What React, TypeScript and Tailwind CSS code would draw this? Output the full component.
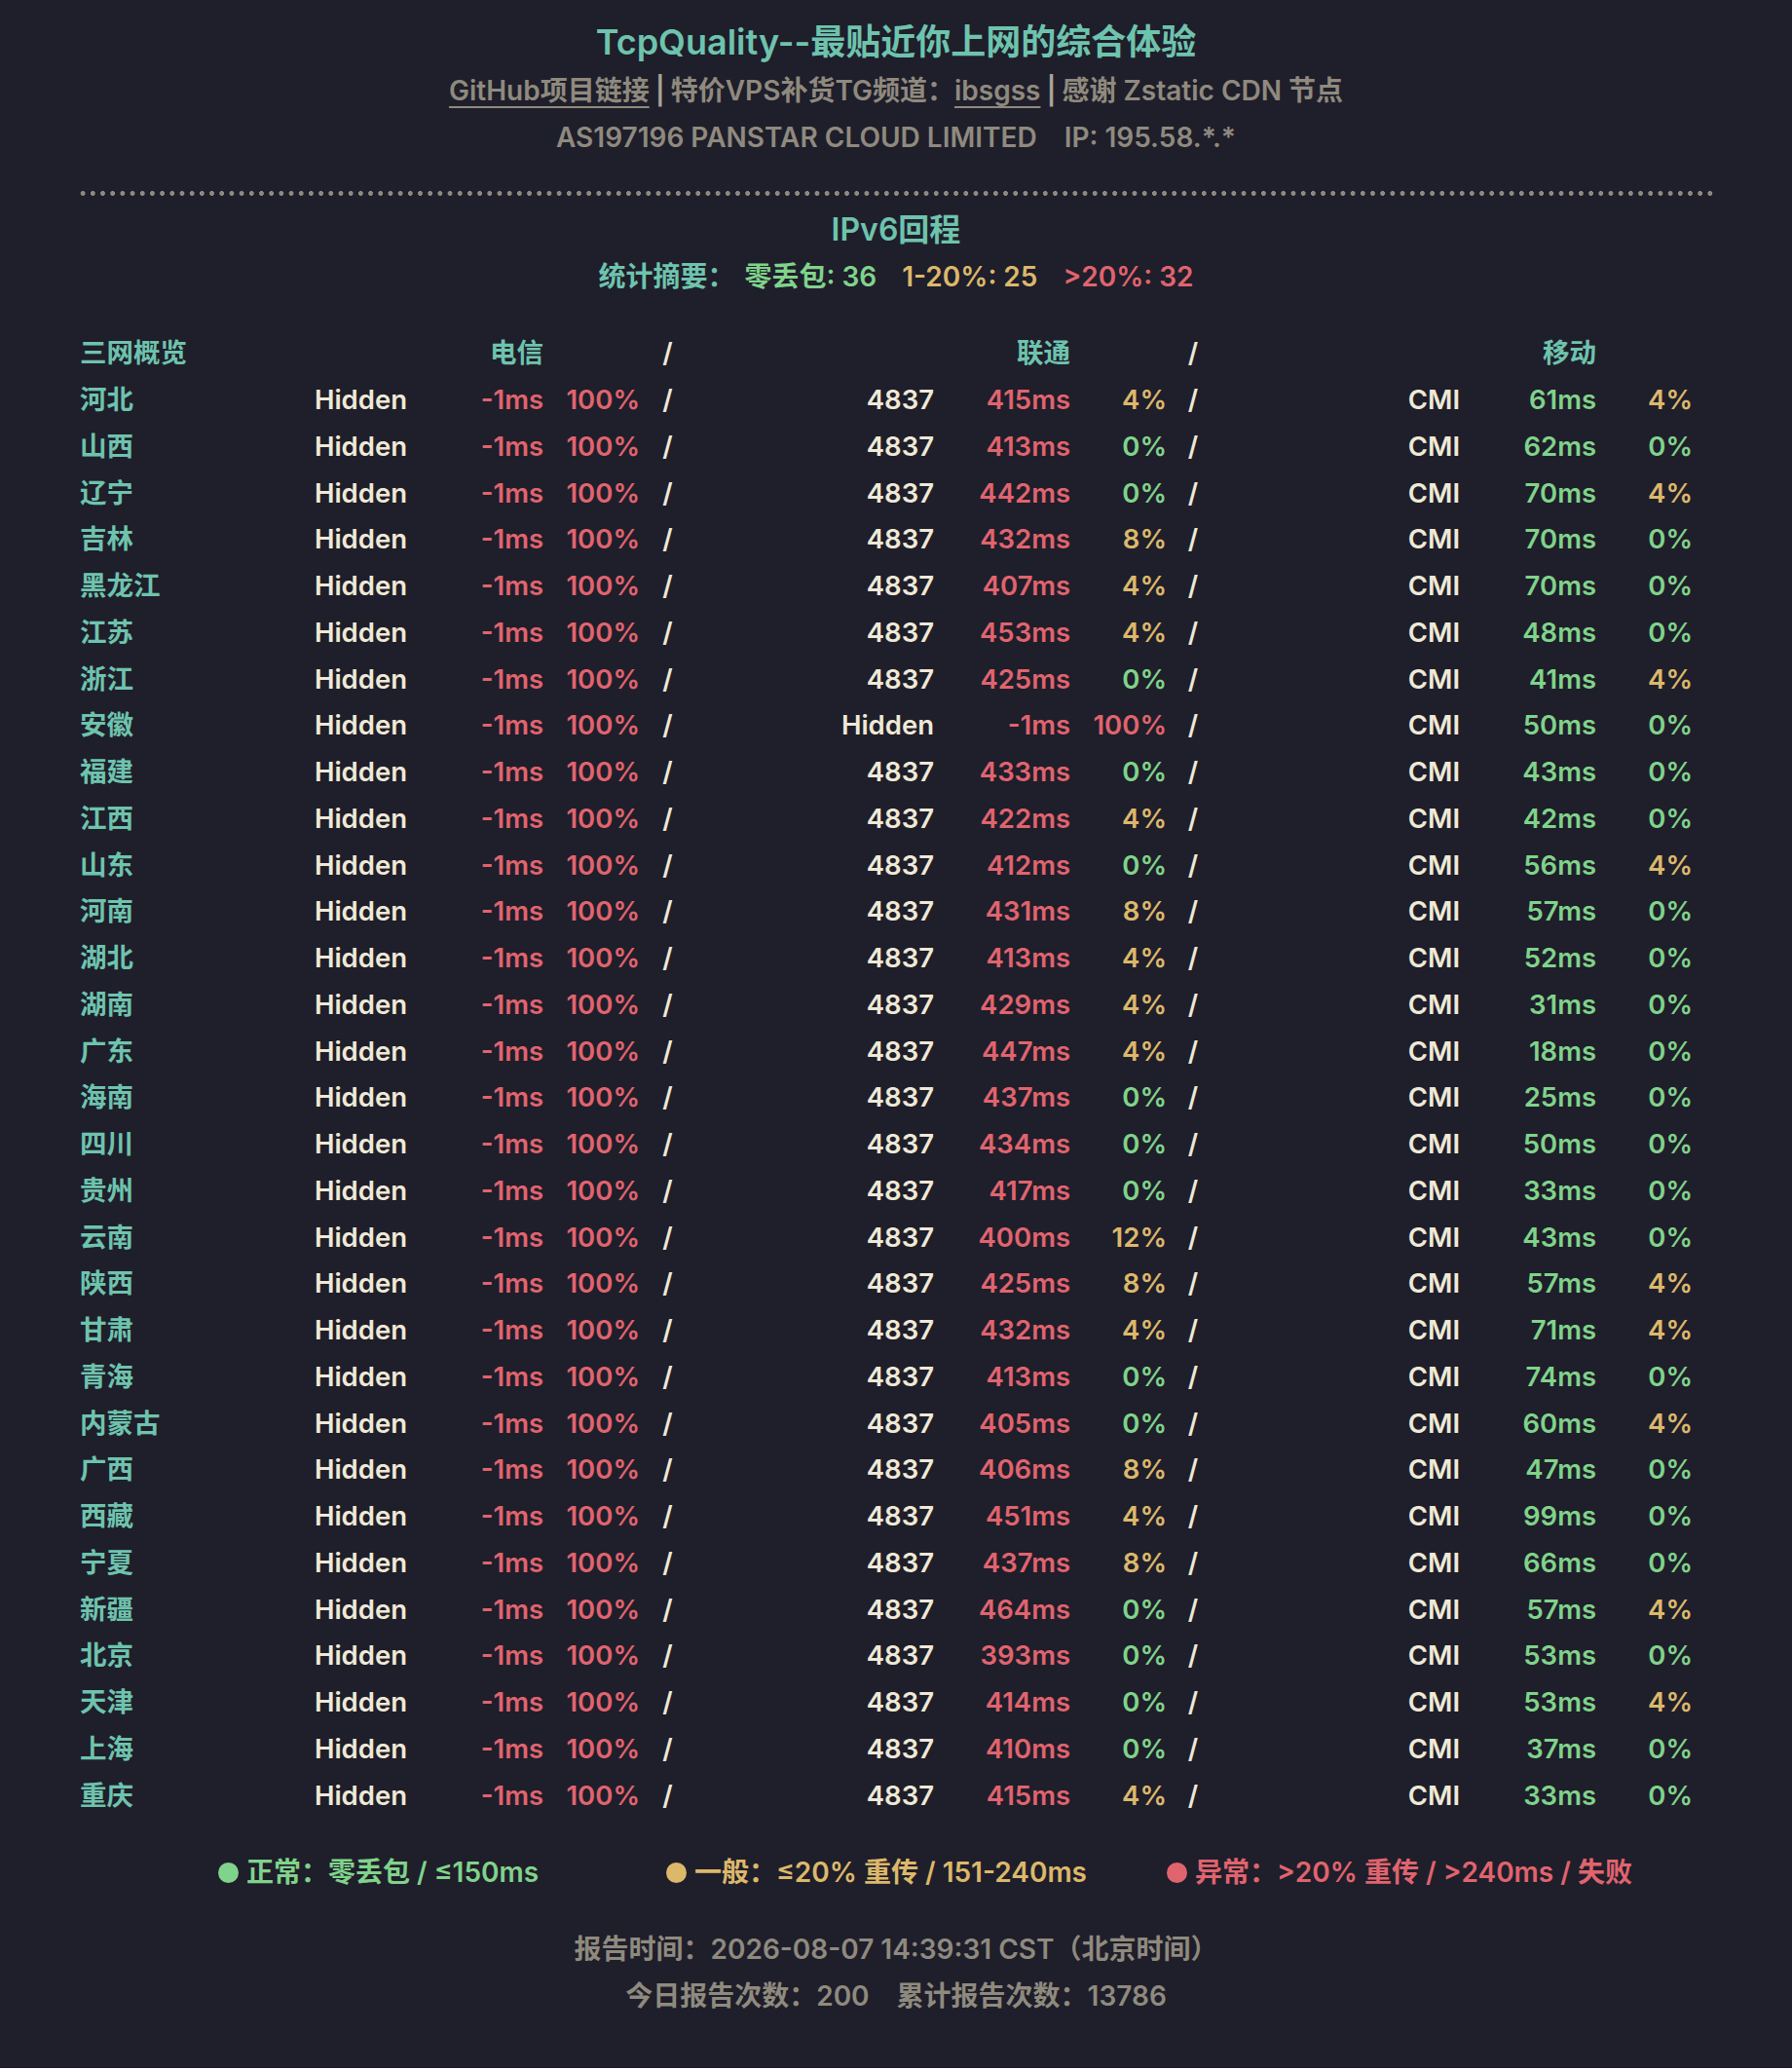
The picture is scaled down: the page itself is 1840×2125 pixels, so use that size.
import React from 'react';

type Row = {
  name: string;
  ct: [string, number, number];
  cu: [string, number, number];
  cm: [string, number, number];
};

const raw: [string, number, number, number, number][] = [
  ['河北', 415, 4, 61, 4],
  ['山西', 413, 0, 62, 0],
  ['辽宁', 442, 0, 70, 4],
  ['吉林', 432, 8, 70, 0],
  ['黑龙江', 407, 4, 70, 0],
  ['江苏', 453, 4, 48, 0],
  ['浙江', 425, 0, 41, 4],
  ['安徽', -1, 100, 50, 0],
  ['福建', 433, 0, 43, 0],
  ['江西', 422, 4, 42, 0],
  ['山东', 412, 0, 56, 4],
  ['河南', 431, 8, 57, 0],
  ['湖北', 413, 4, 52, 0],
  ['湖南', 429, 4, 31, 0],
  ['广东', 447, 4, 18, 0],
  ['海南', 437, 0, 25, 0],
  ['四川', 434, 0, 50, 0],
  ['贵州', 417, 0, 33, 0],
  ['云南', 400, 12, 43, 0],
  ['陕西', 425, 8, 57, 4],
  ['甘肃', 432, 4, 71, 4],
  ['青海', 413, 0, 74, 0],
  ['内蒙古', 405, 0, 60, 4],
  ['广西', 406, 8, 47, 0],
  ['西藏', 451, 4, 99, 0],
  ['宁夏', 437, 8, 66, 0],
  ['新疆', 464, 0, 57, 4],
  ['北京', 393, 0, 53, 0],
  ['天津', 414, 0, 53, 4],
  ['上海', 410, 0, 37, 0],
  ['重庆', 415, 4, 33, 0],
];

const rows: Row[] = raw.map(([name, uMs, uLoss, mMs, mLoss]) => ({
  name,
  ct: ['Hidden', -1, 100],
  cu: [uMs === -1 ? 'Hidden' : '4837', uMs, uLoss],
  cm: ['CMI', mMs, mLoss],
}));

const msColor = (ms: number) =>
  ms < 0 || ms > 240 ? 'text-[#e0646e]' : ms > 150 ? 'text-[#dcb86b]' : 'text-[#80d38a]';

const lossColor = (loss: number) =>
  loss === 0 ? 'text-[#80d38a]' : loss <= 20 ? 'text-[#dcb86b]' : 'text-[#e0646e]';

const gridCols =
  'grid grid-cols-[218px_118px_140px_99px_57px_245px_140px_99px_54px_247px_140px_99px]';

const Slash = () => <div className="text-center text-[#efe9d6]">/</div>;

const Carrier = ({ data }: { data: [string, number, number] }) => {
  const [asn, ms, loss] = data;
  return (
    <>
      <div className="text-right text-[#efe9d6]">{asn}</div>
      <div className={`text-right ${msColor(ms)}`}>{ms}ms</div>
      <div className={`text-right ${lossColor(loss)}`}>{loss}%</div>
    </>
  );
};

export default function App() {
  return (
    <div className="min-h-[2123px] bg-[#1f1e2b] font-['Inter','Noto_Sans_CJK_SC',sans-serif] font-semibold text-[28px] text-[#8f8a7e]">
      <div className="mx-auto w-[1680px] pt-[19px]">
        {/* Header */}
        <h1 className="text-center text-[36px] leading-[48px] font-semibold text-[#6ec3ad]">
          TcpQuality--最贴近你上网的综合体验
        </h1>
        <div className="mt-[2px] flex items-center justify-center leading-[48px]">
          <span className="underline decoration-2 underline-offset-[6px]">GitHub项目链接</span>
          <span className="mx-[6px] text-[#a8a397]">|</span>
          <span>特价VPS补货TG频道：</span>
          <span className="underline decoration-2 underline-offset-[6px]">ibsgss</span>
          <span className="mx-[6px] text-[#a8a397]">|</span>
          <span>感谢 Zstatic CDN 节点</span>
        </div>
        <div className="text-center leading-[48px]">
          AS197196 PANSTAR CLOUD LIMITED<span className="inline-block w-[28px]" />IP: 195.58.*.*
        </div>

        <div className="mt-[31px] h-[5px] bg-[radial-gradient(circle,#8f8a7e_2.2px,transparent_2.6px)] bg-[length:10.2px_5px]" />

        <h2 className="mt-[11px] text-center text-[32px] leading-[48px] text-[#6ec3ad]">IPv6回程</h2>
        <div className="text-center leading-[48px]">
          <span className="text-[#6ec3ad]">统计摘要：</span>
          <span className="ml-[10px] text-[#80d38a]">零丢包: 36</span>
          <span className="ml-[26px] text-[#dcb86b]">1-20%: 25</span>
          <span className="ml-[26px] text-[#e0646e]">&gt;20%: 32</span>
        </div>

        {/* Table */}
        <div className="mt-[31px] pl-[2px] text-[27.5px]">
          <div className={`${gridCols} h-[47.75px] items-center`}>
            <div className="text-[#6ec3ad]">三网概览</div>
            <div />
            <div className="text-right text-[#6ec3ad]">电信</div>
            <div />
            <Slash />
            <div />
            <div className="text-right text-[#6ec3ad]">联通</div>
            <div />
            <Slash />
            <div />
            <div className="text-right text-[#6ec3ad]">移动</div>
            <div />
          </div>
          {rows.map((r) => (
            <div key={r.name} className={`${gridCols} h-[47.75px] items-center`}>
              <div className="text-[#6ec3ad]">{r.name}</div>
              <Carrier data={r.ct} />
              <Slash />
              <Carrier data={r.cu} />
              <Slash />
              <Carrier data={r.cm} />
            </div>
          ))}
        </div>

        {/* Legend */}
        <div className="mt-[31px] flex items-center pl-[144px] leading-[48px]">
          <div className="flex w-[460px] items-center text-[#80d38a]">
            <span className="mr-[8px] h-[21px] w-[21px] rounded-full bg-[#80d38a]" />
            正常：零丢包 / ≤150ms
          </div>
          <div className="flex w-[514px] items-center text-[#dcb86b]">
            <span className="mr-[8px] h-[21px] w-[21px] rounded-full bg-[#dcb86b]" />
            一般：≤20% 重传 / 151-240ms
          </div>
          <div className="flex items-center text-[#e0646e]">
            <span className="mr-[8px] h-[21px] w-[21px] rounded-full bg-[#e0646e]" />
            异常：&gt;20% 重传 / &gt;240ms / 失败
          </div>
        </div>

        {/* Footer */}
        <div className="mt-[31px] text-center leading-[48px]">
          报告时间：2026-08-07 14:39:31 CST（北京时间）
        </div>
        <div className="text-center leading-[48px]">
          今日报告次数：200<span className="inline-block w-[28px]" />累计报告次数：13786
        </div>
      </div>
    </div>
  );
}
